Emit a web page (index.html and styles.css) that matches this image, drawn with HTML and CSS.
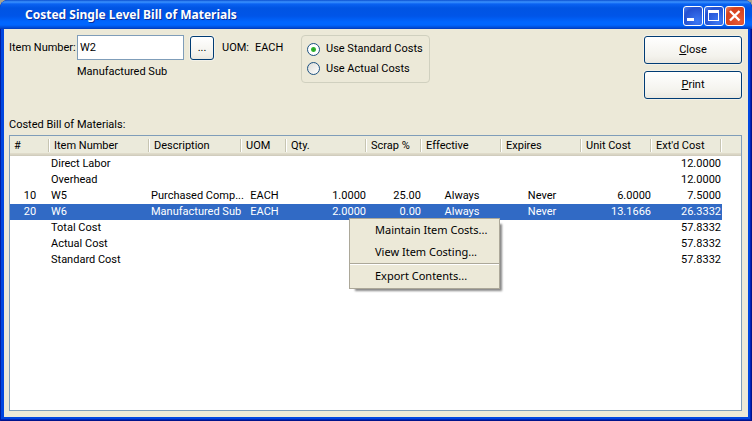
FILE: index.html
```html
<!DOCTYPE html>
<html lang="en">
<head>
<meta charset="utf-8">
<title>Costed Single Level Bill of Materials</title>
<link rel="stylesheet" href="styles.css">
</head>
<body>
<div class="window">
  <header class="titlebar">
    <h1 class="title">Costed Single Level Bill of Materials</h1>
    <div class="window-controls">
      <button class="control" type="button" aria-label="Minimize">
        <svg viewBox="0 0 20 20" shape-rendering="crispEdges"><rect x="4" y="12" width="7" height="3" fill="#fff"/></svg>
      </button>
      <button class="control" type="button" aria-label="Maximize">
        <svg viewBox="0 0 20 20" shape-rendering="crispEdges"><path fill="#fff" fill-rule="evenodd" d="M4 4h11v11H4zM5 7v7h9V7z"/></svg>
      </button>
      <button class="control control-close" type="button" aria-label="Close window">
        <svg viewBox="0 0 20 20"><path d="M5 5l9.500 9.500M14.500 5L5 14.500" stroke="#fff" stroke-width="2.400"/></svg>
      </button>
    </div>
  </header>
  <main class="client">
    <section class="top">
      <div class="item">
        <label class="item-label" for="item">Item Number:</label>
        <input class="item-input" id="item" type="text" value="W2">
        <button class="button browse" type="button" aria-label="Browse items">...</button>
        <span class="item-name">Manufactured Sub</span>
      </div>
      <div class="uom"><span>UOM:</span><span>EACH</span></div>
      <fieldset class="costs" aria-label="Cost basis">
        <label class="choice"><input class="radio" type="radio" name="cost" checked>Use Standard Costs</label>
        <label class="choice"><input class="radio" type="radio" name="cost">Use Actual Costs</label>
      </fieldset>
      <div class="actions">
        <button class="button" type="button"><span><u>C</u>lose</span></button>
        <button class="button" type="button"><span><u>P</u>rint</span></button>
      </div>
    </section>
    <h2 class="list-label" id="list-label">Costed Bill of Materials:</h2>
    <div class="list">
      <table class="table" aria-labelledby="list-label">
        <colgroup>
          <col class="c-num"><col class="c-item"><col class="c-desc"><col class="c-uom"><col class="c-date"><col class="c-scrap"><col class="c-date"><col class="c-date"><col class="c-cost"><col class="c-cost"><col>
        </colgroup>
        <thead>
          <tr><th>#</th><th>Item Number</th><th>Description</th><th>UOM</th><th>Qty.</th><th>Scrap %</th><th>Effective</th><th>Expires</th><th>Unit Cost</th><th>Ext'd Cost</th><th></th></tr>
        </thead>
        <tbody>
          <tr><td></td><td>Direct Labor</td><td></td><td></td><td></td><td></td><td></td><td></td><td></td><td class="n">12.0000</td></tr>
          <tr><td></td><td>Overhead</td><td></td><td></td><td></td><td></td><td></td><td></td><td></td><td class="n">12.0000</td></tr>
          <tr><td class="m">10</td><td>W5</td><td>Purchased Comp...</td><td class="m">EACH</td><td class="n">1.0000</td><td class="n">25.00</td><td class="m">Always</td><td class="m">Never</td><td class="n">6.0000</td><td class="n">7.5000</td></tr>
          <tr class="selected"><td class="m">20</td><td>W6</td><td>Manufactured Sub</td><td class="m">EACH</td><td class="n">2.0000</td><td class="n">0.00</td><td class="m">Always</td><td class="m">Never</td><td class="n">13.1666</td><td class="n">26.3332</td></tr>
          <tr><td></td><td>Total Cost</td><td></td><td></td><td></td><td></td><td></td><td></td><td></td><td class="n">57.8332</td></tr>
          <tr><td></td><td>Actual Cost</td><td></td><td></td><td></td><td></td><td></td><td></td><td></td><td class="n">57.8332</td></tr>
          <tr><td></td><td>Standard Cost</td><td></td><td></td><td></td><td></td><td></td><td></td><td></td><td class="n">57.8332</td></tr>
        </tbody>
      </table>
      <div class="menu" role="menu">
        <button class="menu-item" type="button" role="menuitem">Maintain Item Costs...</button>
        <button class="menu-item" type="button" role="menuitem">View Item Costing...</button>
        <hr class="menu-line">
        <button class="menu-item" type="button" role="menuitem">Export Contents...</button>
      </div>
    </div>
  </main>
</div>
</body>
</html>
```
FILE: styles.css
```css
* { box-sizing: border-box; }

body {
  margin: 0;
  background: #a9a48f;
  color: #000;
  font: 11px/16px Roboto, "Liberation Sans", sans-serif;
}

button, input { font: inherit; color: inherit; }

.window {
  display: flex;
  flex-direction: column;
  min-height: 100vh;
  padding: 0 4px 4px;
  border-radius: 8px 8px 0 0;
  background: #0046e0;
  box-shadow: inset 1px 0 #001ea0, inset -1px -1px #00138c, inset -2px -2px #0024b8;
}

.titlebar {
  display: flex;
  align-items: center;
  height: 29px;
  margin: 0 -4px;
  padding: 0 7px 0 25px;
  border-radius: 8px 8px 0 0;
  background: linear-gradient(#0a4fd0 0, #3b93ff 2px, #0a62f2 4px, #0054e3 8px, #0055e8 16px, #0066ff 22px, #0066ff 25px, #0048d0 28px, #0038b8 29px);
}

.title {
  flex: 1;
  margin: 0;
  color: #fff;
  font: bold 12px/20px "Noto Sans", "Open Sans", sans-serif;
  text-shadow: 1px 1px #0a2f9a;
}

.window-controls { display: flex; gap: 1px; padding-top: 3px; }

.control {
  width: 20px;
  height: 20px;
  padding: 0;
  border: 1px solid #fff;
  border-radius: 3px;
  background: radial-gradient(circle at 75% 80%, #3d79f5, #2450d0 70%, #4b80ee);
}

.control svg { display: block; width: 20px; height: 20px; margin: -1px; }
.control-close { background: radial-gradient(circle at 75% 80%, #e85a35, #d5401c 70%, #e8866c); }

.client {
  display: flex;
  flex: 1;
  flex-direction: column;
  padding: 6px 6px 6px 5px;
  background: #ece9d8;
}

.top { display: flex; align-items: flex-start; }

.item {
  display: grid;
  grid-template-columns: 68px 107px 30px;
  align-items: center;
}

.item-label { white-space: nowrap; }

.item-input {
  width: 107px;
  height: 25px;
  padding: 0 2px;
  border: 1px solid #7f9db9;
  background: #fff;
}

.item-name { grid-column: 2 / 4; margin-top: 4px; }

.button {
  padding: 0;
  border: 1px solid #003c74;
  border-radius: 3px;
  background: linear-gradient(#fff, #f3f2ec 75%, #eae8e0);
  box-shadow: 0 0 0 1px #f3f1e8;
}

.browse { width: 24px; height: 24px; margin-left: 6px; }

.uom { display: flex; gap: 6px; width: 79px; margin: 5px 0 0 8px; }

.costs {
  display: grid;
  gap: 3px;
  width: 129px;
  height: 48px;
  margin: 0;
  padding: 5px;
  border: 1px solid #d0d0bf;
  border-radius: 4px;
  white-space: nowrap;
}

.choice { display: flex; gap: 6px; align-items: center; height: 16px; }

.radio {
  appearance: none;
  width: 13px;
  height: 13px;
  margin: 0;
  border: 1px solid #1c5180;
  border-radius: 50%;
  background: linear-gradient(135deg, #dcdcd7, #fff);
}

.radio:checked { background: radial-gradient(circle, #21a121 0, #35b535 2px, #fff 3px); }

.actions { display: grid; gap: 7px; width: 98px; margin: 1px 0 0 auto; }
.actions .button { height: 28px; }

.list-label { margin: 18px 0 2px; font: inherit; }

.list {
  position: relative;
  flex: 1;
  border: 1px solid #7f9db9;
  background: #fff;
}

.table {
  width: 100%;
  border-collapse: collapse;
  table-layout: fixed;
}

.c-num { width: 40px; }
.c-item { width: 100px; }
.c-desc { width: 92px; }
.c-uom { width: 45px; }
.c-date { width: 80px; }
.c-scrap { width: 55px; }
.c-cost { width: 70px; }

th {
  height: 20px;
  padding: 0 4px;
  background:
    linear-gradient(#c7c5b2, #c7c5b2) calc(100% - 1px) 3px / 1px 13px no-repeat,
    linear-gradient(#fff, #fff) 100% 3px / 1px 13px no-repeat,
    linear-gradient(#ebeadb 17px, #e2decd 17px, #d6d2c2 19px, #cbc7b8 20px);
  font-weight: normal;
  text-align: left;
  white-space: nowrap;
}

th:last-child { background: linear-gradient(#ebeadb 17px, #e2decd 17px, #d6d2c2 19px, #cbc7b8 20px); }
td { height: 16px; padding: 0 1px; white-space: nowrap; }
.n { text-align: right; }
.m { text-align: center; }
.selected td { background: #316ac5; color: #fff; }

.menu {
  position: absolute;
  top: 82px;
  left: 339px;
  width: 151px;
  padding: 0 1px 1px;
  border: 1px solid #aca899;
  background: #ece9d8;
  box-shadow: 4px 4px 2px -2px #888;
  font: 11px/22px "Noto Sans", "DejaVu Sans", sans-serif;
}

.menu-item {
  display: block;
  width: 100%;
  height: 22px;
  padding: 0 0 0 24px;
  border: 0;
  background: none;
  text-align: left;
}

.menu-line { height: 2px; margin: 0 -1px; border: 0; border-top: 1px solid #aca899; background: #fff; }
```
